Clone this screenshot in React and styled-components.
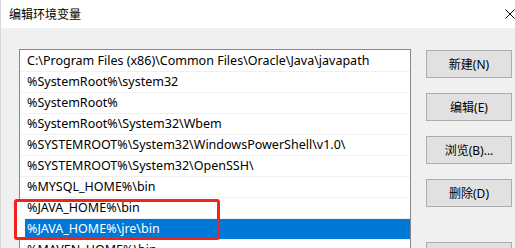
import React from 'react';
import styled, { createGlobalStyle } from 'styled-components';

const GlobalStyle = createGlobalStyle`
  html, body {
    margin: 0;
    padding: 0;
    background: #f0f0f0;
  }
  * {
    box-sizing: border-box;
  }
`;

const uiFont = `'Noto Sans', 'Noto Sans CJK SC', sans-serif`;

const Window = styled.div`
  position: relative;
  width: 515px;
  height: 248px;
  overflow: hidden;
  background: #f0f0f0;
  border-left: 1px solid #d6d6d6;
  font-family: ${uiFont};
  font-size: 12px;
  color: #000;
`;

const TitleBar = styled.div`
  height: 28px;
  background: #fff;
  display: flex;
  align-items: center;
  justify-content: space-between;
  padding: 0 0 0 8px;
`;

const Title = styled.span`
  font-family: 'Noto Sans CJK SC', sans-serif;
  font-size: 12px;
  margin-top: -2px;
`;

const CloseIcon = styled.svg`
  width: 10px;
  height: 10px;
  flex: none;
`;

const Body = styled.div`
  display: flex;
  align-items: flex-start;
  gap: 15px;
  padding: 21px 0 0 18px;
`;

const List = styled.div`
  width: 392px;
  height: 260px;
  flex: none;
  background: #fff;
  border: 1px solid #828790;
  padding-top: 1px;
`;

const Row = styled.div`
  height: 21px;
  line-height: 20px;
  padding-left: 7px;
  font-size: 12.5px;
  border-bottom: 1px solid #f0f0f0;
  white-space: nowrap;
  overflow: hidden;
  background: ${p => (p.$selected ? '#0078d7' : '#fff')};
  color: ${p => (p.$selected ? '#fff' : '#000')};
`;

const Buttons = styled.div`
  display: flex;
  flex-direction: column;
  gap: 15px;
  padding-top: 1px;
`;

const Button = styled.button`
  width: 86px;
  height: 28px;
  margin-top: ${p => (p.$spaced ? '20px' : '0')};
  background: #e1e1e1;
  border: 1px solid #adadad;
  border-radius: 0;
  padding: 0;
  font-family: ${uiFont};
  font-size: 12px;
  color: #000;
`;

const Highlight = styled.div`
  position: absolute;
  left: 13px;
  top: 199px;
  width: 206px;
  height: 41px;
  border: 3px solid #f2221c;
  border-radius: 3px;
  box-shadow: inset 8px 0 0 #fff;
`;

const paths = [
  'C:\\Program Files (x86)\\Common Files\\Oracle\\Java\\javapath',
  '%SystemRoot%\\system32',
  '%SystemRoot%',
  '%SystemRoot%\\System32\\Wbem',
  '%SYSTEMROOT%\\System32\\WindowsPowerShell\\v1.0\\',
  '%SYSTEMROOT%\\System32\\OpenSSH\\',
  '%MYSQL_HOME%\\bin',
  '%JAVA_HOME%\\bin',
  '%JAVA_HOME%\\jre\\bin',
  '%MAVEN_HOME%\\bin',
];

const actions = ['新建(N)', '编辑(E)', '浏览(B)...', '删除(D)'];

const App = () => {
  return (
    <Window>
      <GlobalStyle />
      <TitleBar>
        <Title>编辑环境变量</Title>
        <CloseIcon viewBox="0 0 10 10">
          <path d="M0.5 0.5 L9.5 9.5 M9.5 0.5 L0.5 9.5" stroke="#000" strokeWidth="1" fill="none" />
        </CloseIcon>
      </TitleBar>
      <Body>
        <List>
          {paths.map((p, i) => (
            <Row key={p} $selected={i === 8}>{p}</Row>
          ))}
        </List>
        <Buttons>
          {actions.map(a => (
            <Button key={a}>{a}</Button>
          ))}
          <Button $spaced>上移(U)</Button>
        </Buttons>
      </Body>
      <Highlight />
    </Window>
  );
};

export default App;
